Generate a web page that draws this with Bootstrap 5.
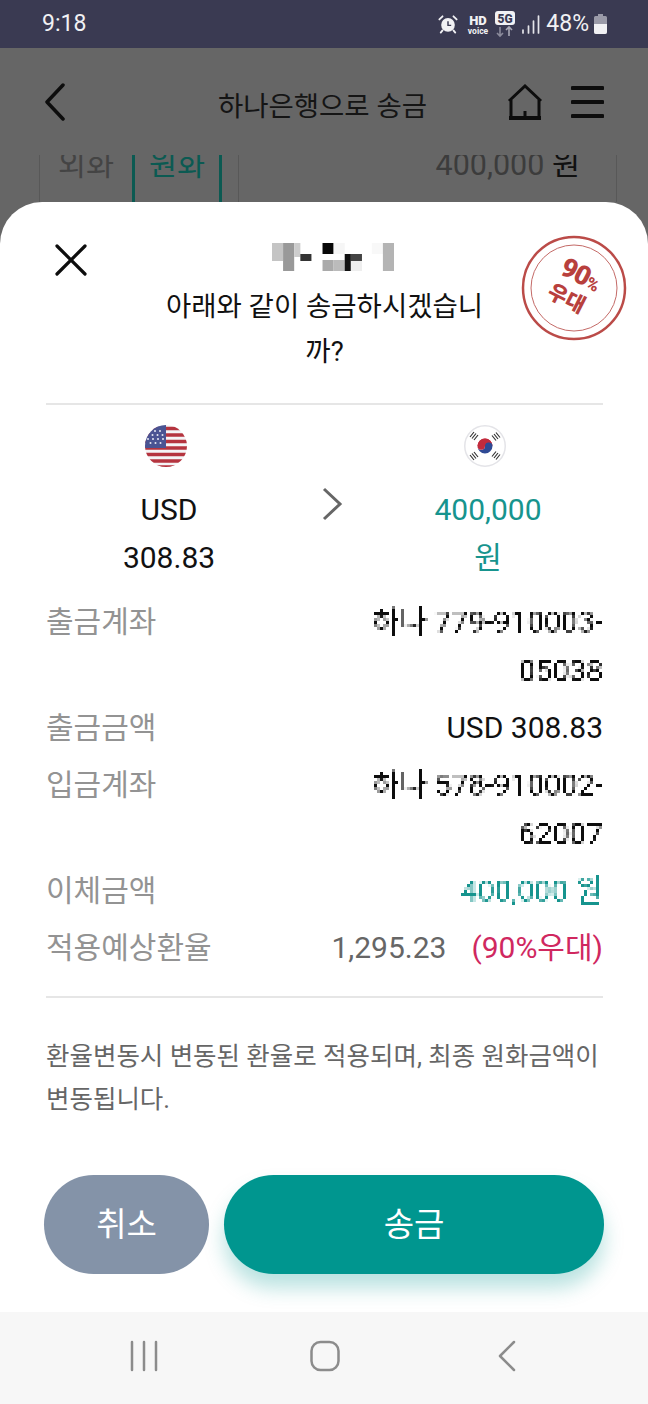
<!DOCTYPE html>
<html lang="ko">
<head>
  <meta charset="UTF-8">
  <meta name="viewport" content="width=device-width, initial-scale=1.0">
  <title>하나은행으로 송금</title>
  <link href="https://cdn.jsdelivr.net/npm/bootstrap@5.3.2/dist/css/bootstrap.min.css" rel="stylesheet">
  <style>
    html, body { margin: 0; background: #666; }
    body { font-family: Roboto, "Noto Sans CJK KR", sans-serif; }
    .screen { width: 648px; height: 1404px; overflow: hidden; background: #666; }
    .status-bar { height: 48px; background: #3a3a52; color: #f1f1f4; padding: 0 41px 0 42px; font-size: 23px; }
    .status-right { font-size: 23px; gap: 5px; }
    .app-head { height: 107px; padding: 0 44px; }
    .app-title { font-size: 27.5px; color: #151515; margin-left: 72px; margin-top: 10px; }
    .head-icons { gap: 28px; }
    .tab-strip { height: 47px; overflow: hidden; margin: 0 31px 0 39px; border-left: 1px solid #585858; border-right: 1px solid #585858; }
    .tab-inner { margin-top: -14px; font-size: 30.5px; line-height: 48px; }
    .tab-off { width: 92px; text-align: center; color: #444; }
    .tab-on { width: 90px; text-align: center; color: #0b5a52; border-left: 3px solid #0b5a52; border-right: 3px solid #0b5a52; height: 70px; }
    .tab-amt { flex: 1; margin-left: 16px; padding-right: 36px; text-align: right; color: #3c3c3c; border-left: 1px solid #585858; height: 70px; }
    .tab-amt span { color: #111; }

    .sheet { height: 1110px; background: #fff; border-radius: 42px 42px 0 0; padding: 0 45px 0 46px; position: relative; }
    .close-btn { position: absolute; left: 55px; top: 42px; }
    .stamp { position: absolute; left: 518px; top: 30px; }
    .sheet-head { height: 203px; padding-top: 41px; text-align: center; border-bottom: 2px solid #e6e6e6; }
    .name-blur { display: block; margin: 0 auto 0 226px; }
    .sheet-title { font-size: 27.5px; line-height: 45px; color: #111; margin: 13px auto 0; width: 335px; word-break: break-all; }
    .swap { height: 192px; padding-top: 20px; font-size: 30px; line-height: 48px; color: #111; }
    .swap-col { width: 200px; text-align: center; }
    .swap-col svg { display: block; margin: 0 auto 19px; }
    .swap-left { margin-left: 23px; }
    .swap-left svg { transform: translateX(-3px); }
    .swap-right { margin-right: 15px; color: #17948e; }
    .swap-right svg { transform: translateX(-3px); }
    .swap-arrow { margin: 61px 0 0 7px; }
    .info-row { font-size: 30px; line-height: 49px; margin-bottom: 8px; color: #111; }
    .info-label { color: #939393; white-space: nowrap; }
    .info-value { text-align: right; width: 250px; }
    .wide-value { width: auto; }
    .mosaic { filter: url(#mosaic); }
    .teal-text { color: #17948e; }
    .rate { color: #666; margin-right: 25px; }
    .benefit { color: #d0285f; }
    .note { border-top: 2px solid #e6e6e6; margin-top: 24px; padding-top: 37px; font-size: 25.5px; line-height: 43px; color: #666; height: 179px; white-space: nowrap; }
    .btn-row { gap: 15px; margin: 0 -1px 0 -2px; }
    .btn-cancel, .btn-send { height: 99px; border: 0; border-radius: 50px; color: #fff; font-size: 33px; }
    .btn-cancel { width: 165px; background: #8493a8; }
    .btn-send { flex: 1; background: #00968f; box-shadow: 0 14px 20px rgba(0, 150, 143, .28); }
    .btn-cancel:hover { background: #8493a8; color: #fff; }
    .btn-send:hover { background: #00968f; color: #fff; }

    .nav-keys { height: 92px; background: #f7f7f7; padding: 28px 132px 0 129px; }
    .nav-home { margin-left: -7px; }
  </style>
</head>
<body>

  <svg width="0" height="0" class="d-block" aria-hidden="true">
    <filter id="mosaic" x="0" y="0" width="100%" height="100%">
      <feFlood x="1" y="1" width="1" height="1" flood-color="#000"/>
      <feComposite width="3" height="3"/>
      <feTile result="dots"/>
      <feComposite in="SourceGraphic" in2="dots" operator="in"/>
      <feMorphology operator="dilate" radius="1"/>
    </filter>
  </svg>

  <div class="screen">
    <!-- Status bar -->
    <div class="status-bar d-flex align-items-center justify-content-between">
      <span>9:18</span>
      <div class="status-right d-flex align-items-center">
        <svg width="20" height="22" viewBox="0 0 22 22">
          <circle cx="11" cy="12" r="7.500" fill="#f1f1f4"/>
          <path d="M11 8v4.500h3.500" fill="none" stroke="#3a3a52" stroke-width="1.600"/>
          <path d="M1.500 6 5 2.500M20.500 6 17 2.500M5 18l-2 2.500M17 18l2 2.500" stroke="#f1f1f4" stroke-width="2" stroke-linecap="round"/>
        </svg>
        <svg width="22" height="24" viewBox="0 0 22 24" class="ms-1">
          <text x="11" y="13" text-anchor="middle" font-family="Roboto" font-weight="900" font-size="13" fill="#f1f1f4">HD</text>
          <text x="11" y="22" text-anchor="middle" font-family="Roboto" font-weight="700" font-size="8.500" fill="#f1f1f4">voice</text>
        </svg>
        <svg width="22" height="28" viewBox="0 0 22 28">
          <rect x="1" y="1" width="20" height="14" rx="3" fill="#f1f1f4"/>
          <text x="11" y="12.500" text-anchor="middle" font-family="Roboto" font-weight="900" font-size="12" fill="#3a3a52">5G</text>
          <path d="M6 17v9M3 23l3 3 3-3" fill="none" stroke="#8b8b9b" stroke-width="1.600"/>
          <path d="M15 26v-9M12 20l3-3 3 3" fill="none" stroke="#a9a9b6" stroke-width="1.600"/>
        </svg>
        <svg width="20" height="24" viewBox="0 0 20 24">
          <path d="M2 18v3M7.500 14v7M12.500 9v12M17.500 4v17" stroke="#e4e4e9" stroke-width="1.700" stroke-linecap="round"/>
        </svg>
        <span>48%</span>
        <svg width="13" height="20" viewBox="0 0 13 20">
          <path d="M4 0h5v2h2.500A1.500 1.500 0 0 1 13 3.500V18a2 2 0 0 1-2 2H2a2 2 0 0 1-2-2V3.500A1.500 1.500 0 0 1 1.500 2H4z" fill="#9a9aa8"/>
          <path d="M0 10h13v8a2 2 0 0 1-2 2H2a2 2 0 0 1-2-2z" fill="#f1f1f4"/>
        </svg>
      </div>
    </div>

    <!-- App header behind the sheet -->
    <div class="app-head d-flex align-items-center justify-content-between">
      <svg width="22" height="38" viewBox="0 0 22 38">
        <path d="M19 2 3 19l16 17" fill="none" stroke="#0d0d0d" stroke-width="3.500" stroke-linecap="round" stroke-linejoin="round"/>
      </svg>
      <div class="app-title">하나은행으로 송금</div>
      <div class="head-icons d-flex align-items-center">
        <svg width="36" height="36" viewBox="0 0 36 36">
          <path d="M2 17 18 2l16 15M4 16v18h28V16M18 34v-7" fill="none" stroke="#0d0d0d" stroke-width="3"/>
          <path d="M2 34h32" stroke="#0d0d0d" stroke-width="4"/>
        </svg>
        <svg width="33" height="34" viewBox="0 0 33 34">
          <path d="M1.500 3h30M1.500 17h30M1.500 31h30" stroke="#0d0d0d" stroke-width="4" stroke-linecap="round"/>
        </svg>
      </div>
    </div>

    <!-- Tabs cut off by the sheet -->
    <div class="tab-strip">
      <div class="tab-inner d-flex">
        <div class="tab-off">외화</div>
        <div class="tab-on">원화</div>
        <div class="tab-amt">400,000 <span>원</span></div>
      </div>
    </div>

    <!-- Bottom sheet -->
    <div class="sheet">
      <svg class="close-btn" width="32" height="32" viewBox="0 0 32 32">
        <path d="M2 2l28 28M30 2 2 30" stroke="#0d0d0d" stroke-width="3.200" stroke-linecap="round"/>
      </svg>
      <svg class="stamp" width="112" height="112" viewBox="0 0 112 112">
        <circle cx="56" cy="56" r="51" fill="none" stroke="#bb4b48" stroke-width="2.500"/>
        <circle cx="56" cy="56" r="43" fill="none" stroke="#c46a67" stroke-width="1"/>
        <g transform="rotate(27 56 56)" fill="#b8403d" font-family="Roboto, 'Noto Sans CJK KR', sans-serif" font-weight="900" text-anchor="middle">
          <text x="56" y="50" font-size="27" letter-spacing="-1">90<tspan font-size="17">%</tspan></text>
          <text x="54" y="76" font-size="21">우대</text>
        </g>
      </svg>

      <div class="sheet-head">
        <svg class="name-blur" width="122" height="28" viewBox="0 0 99 28" preserveAspectRatio="none">
          <rect x="0" y="0" width="9" height="18" fill="#c4c4c4"/>
          <rect x="9" y="0" width="9" height="28" fill="#999"/>
          <rect x="18" y="0" width="5" height="14" fill="#ccc"/>
          <rect x="23" y="11" width="9" height="7" fill="#333"/>
          <rect x="41" y="0" width="9" height="11" fill="#080808"/>
          <rect x="50" y="0" width="9" height="11" fill="#f6f6f6"/>
          <rect x="41" y="17" width="9" height="11" fill="#aaa"/>
          <rect x="50" y="17" width="9" height="11" fill="#bbb"/>
          <rect x="59" y="11" width="5" height="17" fill="#111"/>
          <rect x="64" y="11" width="9" height="7" fill="#444"/>
          <rect x="64" y="18" width="9" height="10" fill="#eee"/>
          <rect x="81" y="0" width="9" height="11" fill="#f8f8f8"/>
          <rect x="90" y="0" width="9" height="28" fill="#b4b4b4"/>
        </svg>
        <div class="sheet-title">아래와 같이 송금하시겠습니까?</div>
      </div>

      <div class="swap d-flex justify-content-between">
        <div class="swap-col swap-left">
          <svg width="42" height="42" viewBox="0 0 42 42">
            <clipPath id="usClip"><circle cx="21" cy="21" r="21"/></clipPath>
            <g clip-path="url(#usClip)">
              <rect width="42" height="42" fill="#f4f4f6"/>
              <path d="M0 3.500h42M0 10h42M0 16.500h42M0 23h42M0 29.500h42M0 36h42M0 42h42" stroke="#b5343f" stroke-width="3.400"/>
              <rect width="21" height="23" fill="#4a5493"/>
              <g fill="#e6e8f2">
                <circle cx="5" cy="6" r="1"/><circle cx="10" cy="6" r="1"/><circle cx="15" cy="6" r="1"/>
                <circle cx="7.500" cy="10" r="1"/><circle cx="12.500" cy="10" r="1"/><circle cx="17.500" cy="10" r="1"/>
                <circle cx="3" cy="14" r="1"/><circle cx="8" cy="14" r="1"/><circle cx="13" cy="14" r="1"/><circle cx="18" cy="14" r="1"/>
                <circle cx="5.500" cy="18" r="1"/><circle cx="10.500" cy="18" r="1"/><circle cx="15.500" cy="18" r="1"/>
              </g>
            </g>
          </svg>
          <div>USD</div>
          <div>308.83</div>
        </div>
        <svg class="swap-arrow" width="22" height="36" viewBox="0 0 22 36">
          <path d="M3 3l16 15L3 33" fill="none" stroke="#666" stroke-width="3"/>
        </svg>
        <div class="swap-col swap-right">
          <svg width="42" height="42" viewBox="0 0 42 42">
            <circle cx="21" cy="21" r="20.250" fill="#fff" stroke="#e4e4e8" stroke-width="1.500"/>
            <path d="M13.500 21a7.500 7.500 0 0 1 15 0z" fill="#c22b3d"/>
            <path d="M13.500 21a7.500 7.500 0 0 0 15 0 3.750 3.750 0 0 0-7.500 0 3.750 3.750 0 0 1-7.500 0z" fill="#2f4a95"/>
            <path d="M13.500 21a3.750 3.750 0 0 0 7.500 0 3.750 3.750 0 0 1 7.500 0 7.500 7.500 0 0 0-15 0z" fill="#c22b3d"/>
            <g stroke="#333" stroke-width="1.200">
              <path d="M8 13.500l4-5M10 15l4-5M6 12l4-5"/>
              <path d="M30 9l4 5M28 10.500l4 5M32 7.500l4 5"/>
              <path d="M8 28.500l4 5M10 27l4 5M6 30l4 5"/>
              <path d="M30 33l4-5M28 31.500l4-5M32 34.500l4-5"/>
            </g>
          </svg>
          <div>400,000</div>
          <div>원</div>
        </div>
      </div>

      <div class="info-row d-flex justify-content-between">
        <div class="info-label">출금계좌</div>
        <div class="info-value mosaic">하나 779-910003-<br>05038</div>
      </div>
      <div class="info-row d-flex justify-content-between">
        <div class="info-label">출금금액</div>
        <div class="info-value">USD 308.83</div>
      </div>
      <div class="info-row d-flex justify-content-between">
        <div class="info-label">입금계좌</div>
        <div class="info-value mosaic">하나 578-910002-<br>62007</div>
      </div>
      <div class="info-row d-flex justify-content-between">
        <div class="info-label">이체금액</div>
        <div class="info-value mosaic teal-text">400,000 원</div>
      </div>
      <div class="info-row d-flex justify-content-between">
        <div class="info-label">적용예상환율</div>
        <div class="info-value wide-value"><span class="rate">1,295.23</span><span class="benefit">(90%우대)</span></div>
      </div>

      <div class="note">환율변동시 변동된 환율로 적용되며, 최종 원화금액이<br>변동됩니다.</div>

      <div class="btn-row d-flex">
        <button type="button" class="btn btn-cancel">취소</button>
        <button type="button" class="btn btn-send">송금</button>
      </div>
    </div>

    <!-- Android keys -->
    <div class="nav-keys d-flex justify-content-between align-items-start">
      <svg width="30" height="32" viewBox="0 0 30 32">
        <path d="M3 2v28M15 2v28M27 2v28" stroke="#8c8c8c" stroke-width="2.500" stroke-linecap="round"/>
      </svg>
      <svg class="nav-home" width="30" height="32" viewBox="0 0 30 32">
        <rect x="1.500" y="2" width="27" height="28" rx="9" fill="none" stroke="#8c8c8c" stroke-width="2.500"/>
      </svg>
      <svg width="18" height="32" viewBox="0 0 18 32">
        <path d="M16 2 2 16l14 14" fill="none" stroke="#8c8c8c" stroke-width="2.500" stroke-linecap="round" stroke-linejoin="round"/>
      </svg>
    </div>
  </div>

  <script src="https://cdn.jsdelivr.net/npm/bootstrap@5.3.2/dist/js/bootstrap.bundle.min.js"></script>
</body>
</html>
